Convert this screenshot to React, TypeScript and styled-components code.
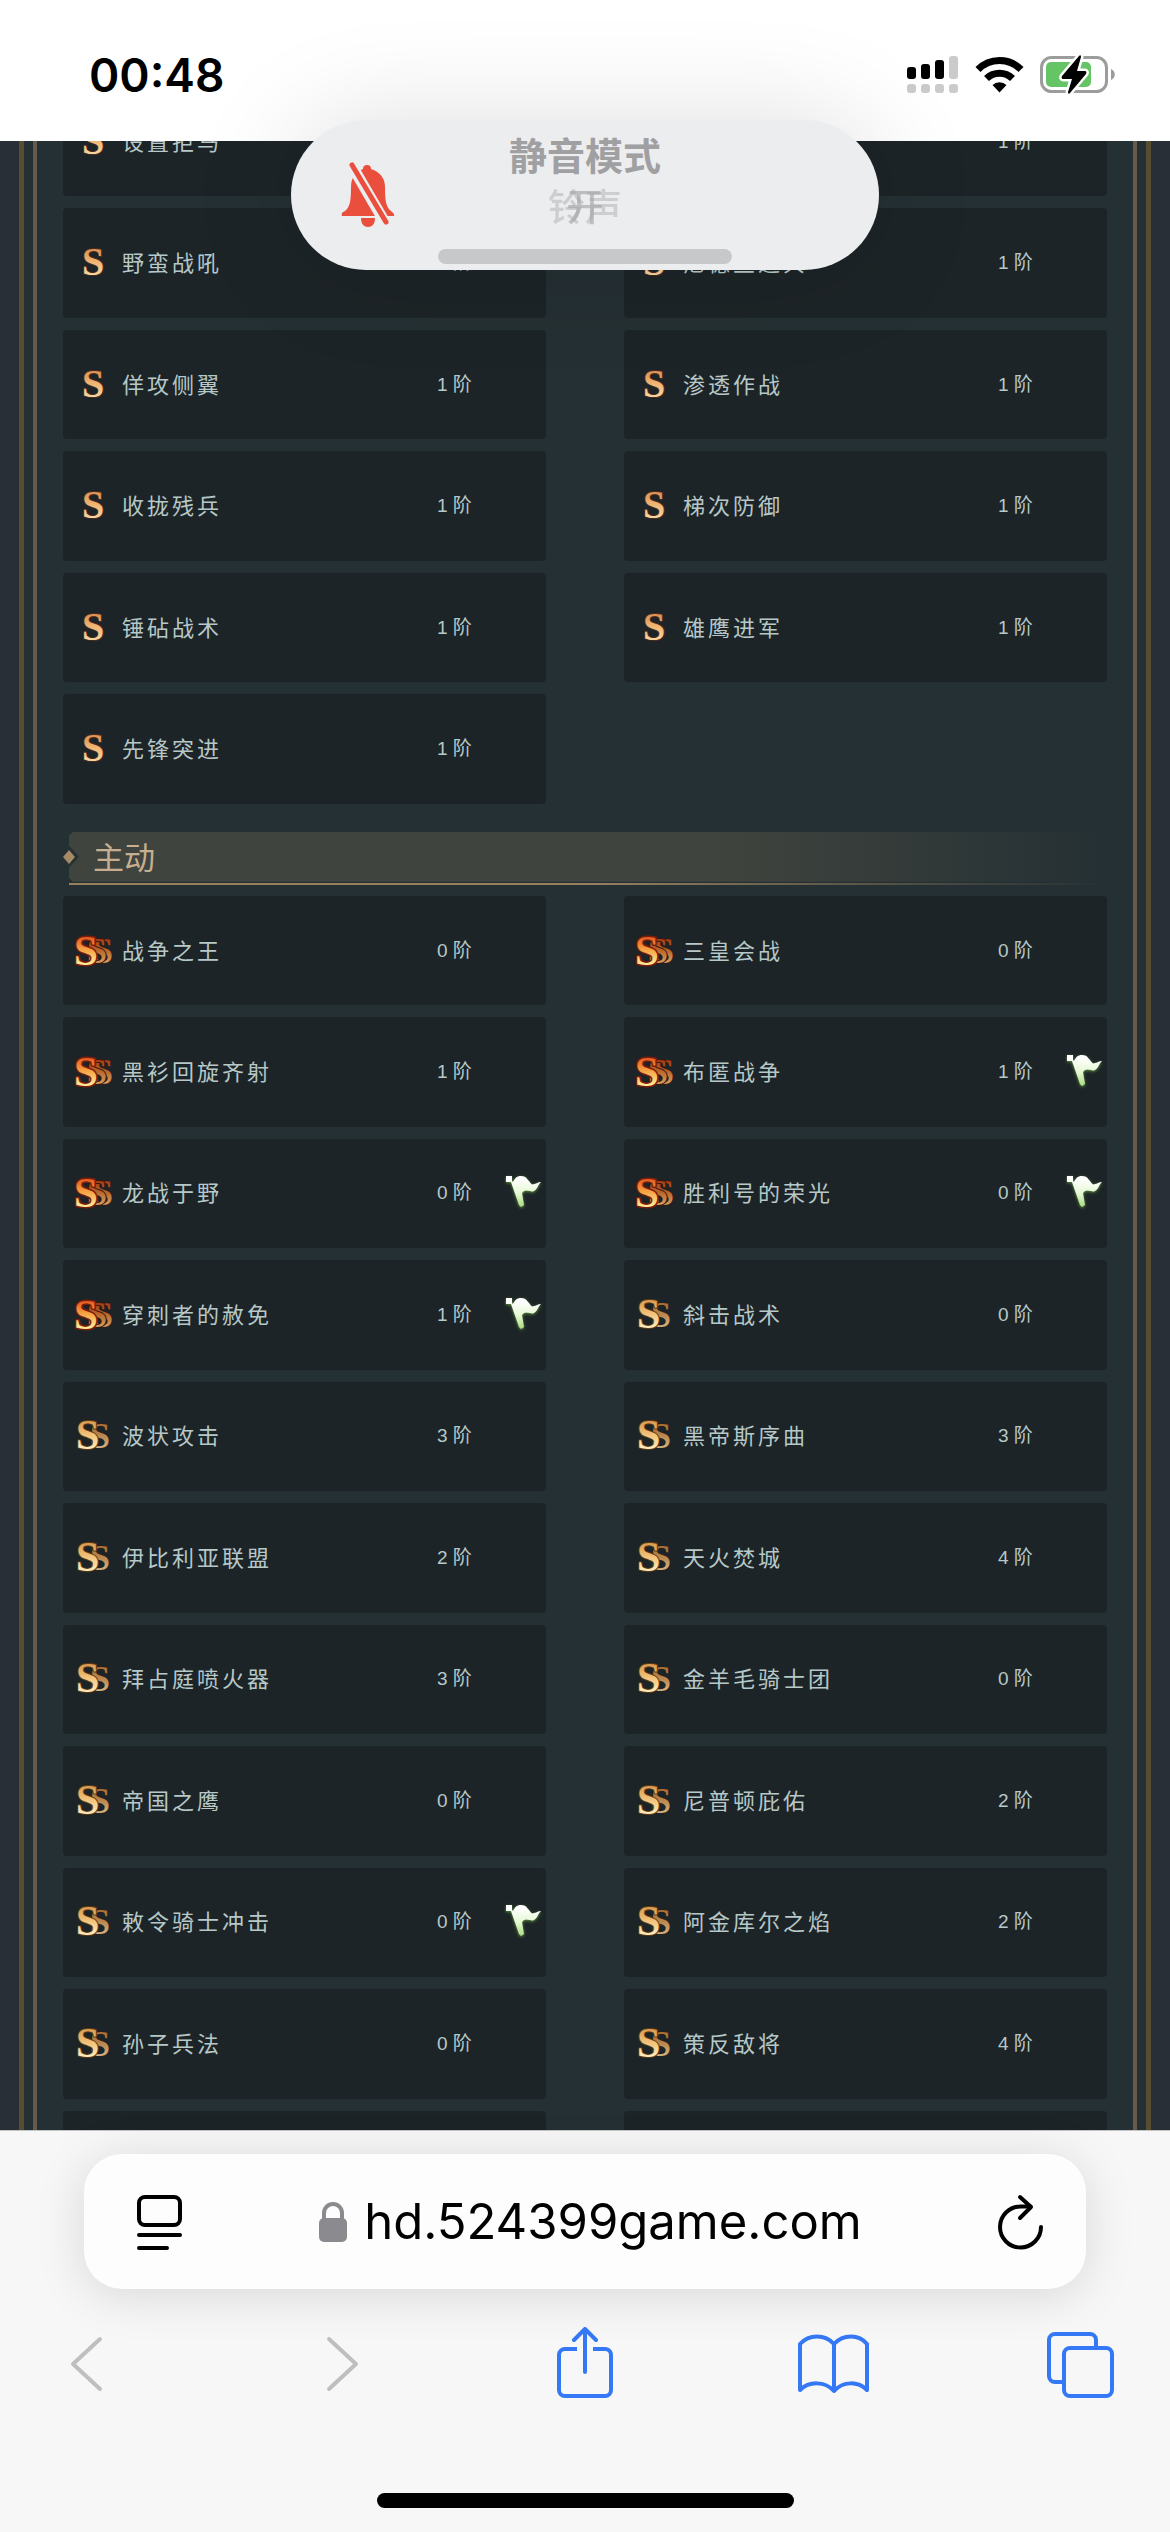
import React from "react";
import styled, { createGlobalStyle } from "styled-components";

const cjk = `"Noto Sans CJK SC", sans-serif`;

const GlobalStyle = createGlobalStyle`
  *, *::before, *::after { box-sizing: border-box; }
  body { margin: 0; background: #f7f7f7; font-family: "Liberation Sans", ${cjk}; }
  h2, p, ul { margin: 0; padding: 0; }
  button { border: 0; padding: 0; background: none; color: inherit; font: inherit; }
  svg { display: block; flex: none; }
`;

const Screen = styled.div`
  position: relative;
  display: flex;
  flex-direction: column;
  height: 100vh;
  overflow: hidden;
`;

const StatusBar = styled.header`
  flex: none;
  display: flex;
  align-items: center;
  justify-content: space-between;
  height: 141px;
  padding: 8px 54px 0 89px;
  background: #fff;
`;

const Clock = styled.time`
  font: 600 46px/56px Inter, sans-serif;
  color: #000;
`;

const StatusIcons = styled.div`
  display: flex;
  align-items: center;
  gap: 16px;
`;

const Toast = styled.div`
  position: absolute;
  top: 120px;
  left: 50%;
  width: 588px;
  height: 150px;
  margin-left: -294px;
  padding-top: 7px;
  border-radius: 75px;
  background: #ecedee;
  box-shadow: 0 0 110px rgba(0, 0, 0, 0.13);
  text-align: center;
  color: #a0a0a2;
`;

const ToastIcon = styled.div`
  position: absolute;
  top: 41px;
  left: 49px;
`;

const ToastTitle = styled.p`
  font: 700 38px/54px ${cjk};
`;

const ToastState = styled.div`
  display: grid;
  place-items: center;
  font: 500 37px/48px ${cjk};
`;

const StateLabel = styled.span<{ $fade: number }>`
  grid-area: 1 / 1;
  opacity: ${(p) => p.$fade};
`;

const ToastLevel = styled.div`
  position: absolute;
  left: 25%;
  right: 25%;
  bottom: 6px;
  height: 15px;
  border-radius: 8px;
  background: #c7c8c9;
`;

const Page = styled.main`
  flex: 1;
  min-height: 0;
  overflow: hidden;
  padding: 0 19px;
  background: #292f37;
`;

const Frame = styled.div`
  min-height: 100%;
  padding: 0 9px;
  border: solid #574d30;
  border-width: 0 5px;
  background: #253034;
`;

const InnerFrame = styled.div`
  padding: 0 26px;
  border: solid #675a4b;
  border-width: 0 4px;
  height: 100%;
`;

const Scrolled = styled.div`
  margin-top: -54px;
`;

const Grid = styled.ul`
  display: grid;
  grid-template-columns: 1fr 1fr;
  gap: 12px 78px;
  list-style: none;
`;

const Card = styled.li`
  display: flex;
  align-items: center;
  aspect-ratio: 75 / 17;
  min-width: 0;
  padding: 0 2px 0 8px;
  border-radius: 4px;
  background: #1d2427;
  color: #b6c8c7;
`;

const CardName = styled.span`
  flex: 1;
  padding: 0 0 4px 7px;
  font: 400 22px/32px ${cjk};
  letter-spacing: 3px;
  white-space: nowrap;
`;

const CardLevel = styled.span`
  width: 67px;
  font: 400 19px/28px "Liberation Sans", ${cjk};
  white-space: nowrap;
`;

const CardMark = styled.span`
  width: 40px;
  height: 40px;
`;

const Section = styled.section`
  padding-top: 28px;
`;

const Heading = styled.h2`
  display: flex;
  align-items: center;
  height: 53px;
  margin-bottom: 11px;
  border-bottom: 2px solid;
  border-image: linear-gradient(90deg, transparent 7px, #98815f 7px, #98815f 50%, transparent) 1;
  font: 400 31px/44px ${cjk};
  color: #c8ae90;
`;

const HeadingBand = styled.span`
  flex: 1;
  height: 50px;
  margin: 0 0 1px -6px;
  padding: 2px 0 0 24px;
  background: linear-gradient(90deg, #40443e 62%, rgba(64, 68, 62, 0));
  clip-path: polygon(0 4px, 4px 0, 100% 0, 100% 100%, 4px 100%, 0 46px, 0 36px, 10px 25px, 0 14px);
`;

const BrowserBar = styled.footer`
  flex: none;
  display: flex;
  flex-direction: column;
  align-items: center;
  padding-top: 23px;
  border-top: 1px solid #c4c4c5;
  background: #f7f7f7;
  height: 402px;
`;

const AddressBar = styled.div`
  align-self: stretch;
  display: flex;
  align-items: center;
  justify-content: space-between;
  height: 135px;
  margin: 0 84px;
  padding: 0 42px 0 51px;
  border-radius: 38px;
  background: #fdfdfd;
  box-shadow: 0 6px 50px rgba(0, 0, 0, 0.13);
`;

const Address = styled.button`
  display: flex;
  align-items: center;
  gap: 17px;
  font: 400 49px/64px Inter, sans-serif;
  color: #000;
`;

const Toolbar = styled.nav`
  align-self: stretch;
  display: flex;
  justify-content: space-between;
  margin-top: 38px;
  padding: 0 52px;
  color: #3478f6;
`;

const HomeIndicator = styled.div`
  width: 417px;
  height: 15px;
  margin-top: 94px;
  border-radius: 8px;
  background: #000;
`;

type Rank = "S" | "SS" | "SSS";
type Skill = { name: string; level: number; rank: Rank; flag?: boolean };

const skill = (rank: Rank, name: string, level: number, flag = false): Skill => ({ rank, name, level, flag });

const passive: Skill[] = [
  skill("S", "设置拒马", 1),
  skill("S", "", 1),
  skill("S", "野蛮战吼", 1),
  skill("S", "尼德兰进兵", 1),
  skill("S", "佯攻侧翼", 1),
  skill("S", "渗透作战", 1),
  skill("S", "收拢残兵", 1),
  skill("S", "梯次防御", 1),
  skill("S", "锤砧战术", 1),
  skill("S", "雄鹰进军", 1),
  skill("S", "先锋突进", 1),
];

const active: Skill[] = [
  skill("SSS", "战争之王", 0),
  skill("SSS", "三皇会战", 0),
  skill("SSS", "黑衫回旋齐射", 1),
  skill("SSS", "布匿战争", 1, true),
  skill("SSS", "龙战于野", 0, true),
  skill("SSS", "胜利号的荣光", 0, true),
  skill("SSS", "穿刺者的赦免", 1, true),
  skill("SS", "斜击战术", 0),
  skill("SS", "波状攻击", 3),
  skill("SS", "黑帝斯序曲", 3),
  skill("SS", "伊比利亚联盟", 2),
  skill("SS", "天火焚城", 4),
  skill("SS", "拜占庭喷火器", 3),
  skill("SS", "金羊毛骑士团", 0),
  skill("SS", "帝国之鹰", 0),
  skill("SS", "尼普顿庇佑", 2),
  skill("SS", "敕令骑士冲击", 0, true),
  skill("SS", "阿金库尔之焰", 2),
  skill("SS", "孙子兵法", 0),
  skill("SS", "策反敌将", 4),
];

const Letter = styled.text`
  font-family: "Liberation Serif", serif;
  font-weight: 700;
  paint-order: stroke;
  stroke-linejoin: round;
`;

function Gradients() {
  const stops: [string, string, string, string][] = [
    ["rankS", "#d98f4e", "#f0b877", "#f8dba6"],
    ["rankSS", "#d99a50", "#f3c57e", "#fff0c8"],
    ["rankSSdim", "#a8682c", "#b9874e", "#d8b98a"],
    ["rankSSS", "#e2541c", "#f6a848", "#fff0a0"],
    ["rankSSSdim", "#a0300c", "#b9682c", "#d8a868"],
  ];
  return (
    <svg width="0" height="0" style={{ position: "absolute" }} aria-hidden="true">
      <defs>
        {stops.map(([id, a, b, c]) => (
          <linearGradient key={id} id={id} gradientUnits="userSpaceOnUse" x1="0" y1="5" x2="0" y2="34">
            <stop offset="0" stopColor={a} />
            <stop offset="0.5" stopColor={b} />
            <stop offset="1" stopColor={c} />
          </linearGradient>
        ))}
        <linearGradient id="flagFill" x1="0" y1="0" x2="0" y2="1">
          <stop offset="0.1" stopColor="#ffffff" />
          <stop offset="0.55" stopColor="#e6f8d4" />
          <stop offset="1" stopColor="#a8dc80" />
        </linearGradient>
        <filter id="flagGlow" x="-30%" y="-30%" width="160%" height="160%">
          <feDropShadow dx="0" dy="1" stdDeviation="1.5" floodColor="#6cae3c" floodOpacity="0.8" />
        </filter>
      </defs>
    </svg>
  );
}

function RankBadge({ rank }: { rank: Rank }) {
  return (
    <svg width="44" height="40" viewBox="0 0 44 40">
      {rank === "S" && (
        <Letter x="11" y="32" fontSize="40" fill="url(#rankS)" stroke="#4a2a22" strokeWidth="2">S</Letter>
      )}
      {rank === "SS" && (
        <>
          <Letter x="19" y="32" fontSize="36" fill="url(#rankSSdim)" stroke="#2a1e18" strokeWidth="1">S</Letter>
          <Letter x="5" y="33" fontSize="42" fill="url(#rankSS)" stroke="#5c3a14" strokeWidth="2">S</Letter>
        </>
      )}
      {rank === "SSS" && (
        <>
          <Letter x="22" y="32" fontSize="36" fill="url(#rankSSSdim)" stroke="#3a1810" strokeWidth="1">S</Letter>
          <Letter x="16" y="32" fontSize="36" fill="url(#rankSSSdim)" stroke="#3a1810" strokeWidth="2">S</Letter>
          <Letter x="3" y="34" fontSize="43" fill="url(#rankSSS)" stroke="#7a1c0c" strokeWidth="3">S</Letter>
        </>
      )}
    </svg>
  );
}

function Flag() {
  return (
    <svg width="40" height="40" viewBox="0 0 40 40">
      <path
        d="M2 3h6v5l1 1c2-4 4-6 8-6 5 0 6 3 8 5 2 3 3 4 5 3 2 0 4-2 7-2-2 2-3 4-4 6-2 3-4 4-7 3-4-1-6-1-8 2l2 12-3 2-2-2L7 9H2z"
        fill="url(#flagFill)"
        filter="url(#flagGlow)"
      />
    </svg>
  );
}

function SkillGrid({ skills, loading = 0 }: { skills: Skill[]; loading?: number }) {
  return (
    <Grid>
      {skills.map((s, i) => (
        <Card key={i}>
          <RankBadge rank={s.rank} />
          <CardName>{s.name}</CardName>
          <CardLevel>{s.level} 阶</CardLevel>
          <CardMark>{s.flag && <Flag />}</CardMark>
        </Card>
      ))}
      {Array.from({ length: loading }, (_, i) => (
        <Card key={`loading-${i}`} />
      ))}
    </Grid>
  );
}

export default function App() {
  return (
    <Screen>
      <GlobalStyle />
      <Gradients />
      <StatusBar>
        <Clock>00:48</Clock>
        <StatusIcons>
          <svg width="52" height="38" viewBox="0 0 52 38">
            <g fill="#000">
              <rect x="0" y="11" width="9" height="12" rx="3" />
              <rect x="14" y="8" width="9" height="15" rx="3" />
              <rect x="28" y="4" width="9" height="19" rx="3" />
            </g>
            <g fill="#cbcbcb">
              <rect x="42" y="0" width="9" height="23" rx="3" />
              {[0, 14, 28, 42].map((x) => (
                <rect key={x} x={x} y="28" width="9" height="9" rx="3" />
              ))}
            </g>
          </svg>
          <svg width="49" height="38" viewBox="0 0 49 38">
            <g fill="none" stroke="#000" strokeWidth="7">
              <path d="M3 13.500a30 30 0 0 1 43 0" />
              <path d="M11.500 22.500a18.500 18.500 0 0 1 26 0" />
            </g>
            <path d="M24.500 36.500l-7-7.500a10 10 0 0 1 14 0z" />
          </svg>
          <svg width="76" height="40" viewBox="0 0 76 40">
            <rect x="1.500" y="2.500" width="65" height="34" rx="10" fill="none" stroke="#9c9c9c" strokeWidth="3" />
            <path d="M71 14c5 2 5 9 0 11z" fill="#9c9c9c" />
            <rect x="6" y="7" width="45" height="25" rx="5" fill="#65c466" />
            <path
              d="M39 1L22 21c-1 2 0 3 1 3h9l-4 13c0 2 1 2 2 1l16-19c1-2 0-3-1-3h-8l4-14c0-2-1-2-2-1z"
              stroke="#fff"
              strokeWidth="5"
              paintOrder="stroke"
              strokeLinejoin="round"
            />
          </svg>
        </StatusIcons>
      </StatusBar>

      <Page>
        <Frame>
          <InnerFrame>
            <Scrolled>
              <SkillGrid skills={passive} />
              <Section>
                <Heading>
                  <svg width="12" height="14" viewBox="0 0 12 14">
                    <path d="M6 0l6 7-6 7-6-7z" fill="#a58a66" />
                  </svg>
                  <HeadingBand>主动</HeadingBand>
                </Heading>
                <SkillGrid skills={active} loading={2} />
              </Section>
            </Scrolled>
          </InnerFrame>
        </Frame>
      </Page>

      <BrowserBar>
        <AddressBar>
          <button aria-label="Page settings">
            <svg width="48" height="56" viewBox="0 0 48 56" fill="none" stroke="#000" strokeWidth="4" strokeLinecap="round">
              <rect x="4" y="3" width="41" height="28" rx="6" />
              <path d="M4 41h41M4 54h28" />
            </svg>
          </button>
          <Address>
            <svg width="28" height="42" viewBox="0 0 28 42">
              <path d="M5 20v-8a9 9 0 0 1 18 0v8" fill="none" stroke="#8a8a8f" strokeWidth="4" />
              <rect x="0" y="17" width="28" height="24" rx="5" fill="#8a8a8f" />
            </svg>
            hd.524399game.com
          </Address>
          <button aria-label="Reload">
            <svg width="46" height="56" viewBox="0 0 46 56" fill="none" stroke="#000" strokeWidth="4" strokeLinecap="round" strokeLinejoin="round">
              <path d="M43 33a20.500 20.500 0 1 1-20.500-20.500h10" />
              <path d="M22 3l11 10-11 11" />
            </svg>
          </button>
        </AddressBar>
        <Toolbar>
          <button aria-label="Back" disabled>
            <svg width="72" height="72" viewBox="0 0 72 72" fill="none" stroke="#bfbfbf" strokeWidth="4" strokeLinecap="round" strokeLinejoin="round">
              <path d="M48 12L21 37l27 25" />
            </svg>
          </button>
          <button aria-label="Forward" disabled>
            <svg width="72" height="72" viewBox="0 0 72 72" fill="none" stroke="#bfbfbf" strokeWidth="4" strokeLinecap="round" strokeLinejoin="round">
              <path d="M28 12l27 25-27 25" />
            </svg>
          </button>
          <button aria-label="Share">
            <svg width="72" height="72" viewBox="0 0 72 72" fill="none" stroke="currentColor" strokeWidth="4" strokeLinecap="round" strokeLinejoin="round">
              <path d="M28 22H16a6 6 0 0 0-6 6v35a6 6 0 0 0 6 6h40a6 6 0 0 0 6-6V28a6 6 0 0 0-6-6H44" strokeLinecap="butt" />
              <path d="M36 45V3M25 13L36 2l11 11" />
            </svg>
          </button>
          <button aria-label="Bookmarks">
            <svg width="72" height="72" viewBox="0 0 72 72" fill="none" stroke="currentColor" strokeWidth="4" strokeLinecap="round" strokeLinejoin="round">
              <path d="M36 17C27 7 11 7 2 17v46c9-9 25-9 34 1 9-10 24-10 33-1V17C61 7 45 7 36 17v47" />
            </svg>
          </button>
          <button aria-label="Tabs">
            <svg width="72" height="72" viewBox="0 0 72 72" fill="none" stroke="currentColor" strokeWidth="4">
              <rect x="18" y="21" width="48" height="48" rx="6" />
              <path d="M50 20v-7a6 6 0 0 0-6-6H9a6 6 0 0 0-6 6v36a6 6 0 0 0 6 6h9" />
            </svg>
          </button>
        </Toolbar>
        <HomeIndicator />
      </BrowserBar>

      <Toast role="status">
        <ToastIcon>
          <svg width="56" height="66" viewBox="0 0 56 66">
            <g fill="#ea4f3d">
              <path d="M27 4a4 4 0 0 1 4 4c9 3 14 9 14 18 0 14 1 20 6 24 2 2 4 3 3 5H2c-1-3 1-4 3-5 5-4 6-10 6-24 0-9 4-15 12-18a4 4 0 0 1 4-4z" />
              <path d="M21 57h14c0 6-3 9-7 9s-7-3-7-9z" />
            </g>
            <path d="M8 -2L50 70" stroke="#ecedee" strokeWidth="11" />
            <path d="M12 4L46 61" stroke="#ea4f3d" strokeWidth="5" strokeLinecap="round" />
          </svg>
        </ToastIcon>
        <ToastTitle>静音模式</ToastTitle>
        <ToastState>
          <StateLabel $fade={0.4}>铃声</StateLabel>
          <StateLabel $fade={0.6}>开</StateLabel>
        </ToastState>
        <ToastLevel />
      </Toast>
    </Screen>
  );
}
